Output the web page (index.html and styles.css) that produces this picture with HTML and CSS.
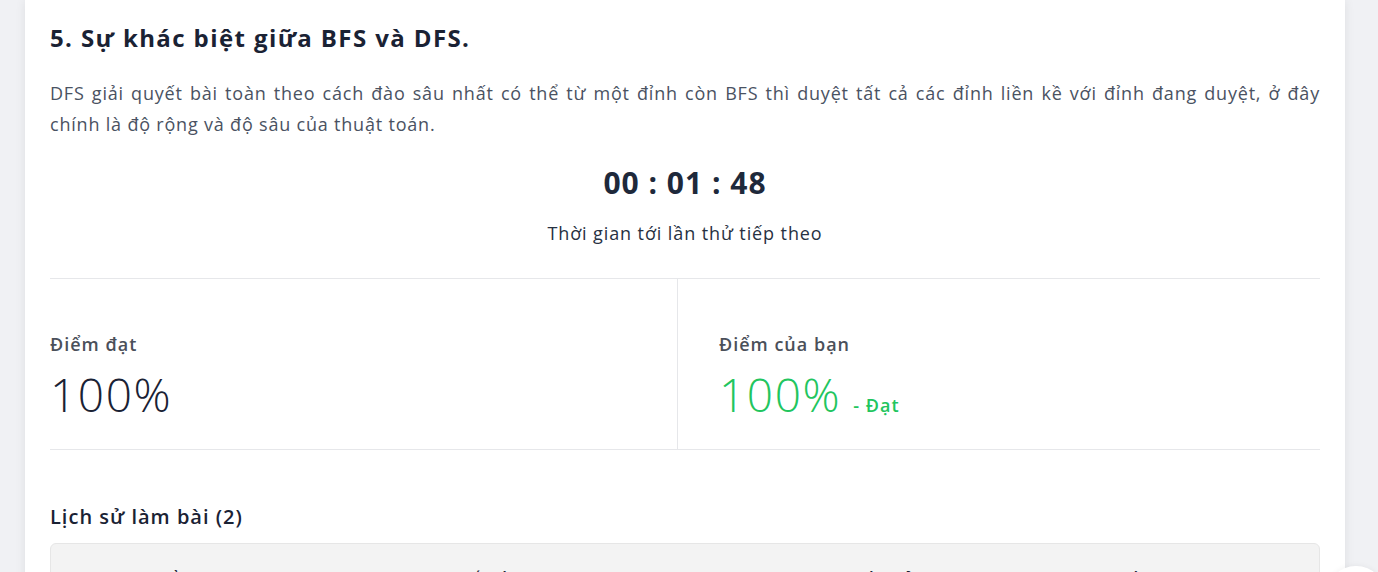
FILE: index.html
```html
<!DOCTYPE html>
<html lang="vi">
<head>
<meta charset="utf-8">
<title>Kết quả bài tập</title>
<link rel="stylesheet" href="styles.css">
</head>
<body>
<div class="page">
  <main class="card">
    <h2 class="title">5. Sự khác biệt giữa BFS và DFS.</h2>
    <p class="desc">DFS giải quyết bài toàn theo cách đào sâu nhất có thể từ một đỉnh còn BFS thì duyệt tất cả các đỉnh liền kề với đỉnh đang duyệt, ở đây chính là độ rộng và độ sâu của thuật toán.</p>
    <div class="timer">00 : 01 : 48</div>
    <div class="timer-caption">Thời gian tới lần thử tiếp theo</div>
    <div class="stats">
      <div class="stat stat-left">
        <div class="stat-label">Điểm đạt</div>
        <div class="stat-value">100%</div>
      </div>
      <div class="stat stat-right">
        <div class="stat-label">Điểm của bạn</div>
        <div class="stat-value pass">100%<span class="stat-note">- Đạt</span></div>
      </div>
    </div>
    <h3 class="history-title">Lịch sử làm bài (2)</h3>
    <div class="history">
      <div class="history-head">
        <span class="col c1">Điểm</span>
        <span class="col c2">Thời gian bắt đầu</span>
        <span class="col c3">Thời gian nộp bài</span>
        <span class="col c4">Kết quả</span>
        <span class="col c5">Chi tiết</span>
      </div>
    </div>
  </main>
</div>
<div class="fab"></div>
</body>
</html>
```
FILE: styles.css
```css
html, body {
  margin: 0;
  padding: 0;
}
body {
  background: #f0f1f4;
  font-family: "Open Sans", "Noto Sans", sans-serif;
  color: #1e293b;
  overflow: hidden;
  height: 572px;
}
.page {
  padding-left: 25px;
  width: 1320px;
}
.card {
  background: #fff;
  box-shadow: 0 0 10px rgba(0, 0, 0, 0.08);
  padding: 0 25px;
  height: 700px;
  box-sizing: border-box;
}
.title {
  margin: 0;
  padding-top: 22px;
  font-size: 24px;
  line-height: 32px;
  font-weight: 700;
  letter-spacing: 1.4px;
  color: #1a2234;
}
.desc {
  margin: 24px 0 0;
  font-size: 18px;
  line-height: 31px;
  letter-spacing: 0.8px;
  color: #4a5262;
  text-align: justify;
}
.timer {
  margin-top: 23px;
  text-align: center;
  font-size: 30px;
  line-height: 40px;
  font-weight: 700;
  letter-spacing: 1px;
  color: #1e293b;
}
.timer-caption {
  margin-top: 16px;
  text-align: center;
  font-size: 18px;
  line-height: 28px;
  letter-spacing: 0.9px;
  color: #273142;
}
.stats {
  margin-top: 31px;
  display: flex;
  border-top: 1px solid #e6e7ea;
  border-bottom: 1px solid #e6e7ea;
}
.stat {
  padding: 52px 0 27px;
}
.stat-left {
  width: 627px;
  border-right: 1px solid #e6e7ea;
}
.stat-right {
  padding-left: 41px;
}
.stat-label {
  font-size: 18px;
  line-height: 26px;
  font-weight: 600;
  letter-spacing: 1px;
  color: #4b505a;
}
.stat-value {
  margin-top: 9px;
  font-size: 46px;
  line-height: 56px;
  font-weight: 300;
  letter-spacing: 1.6px;
  color: #1a2234;
}
.stat-value.pass {
  color: #22c55e;
}
.stat-note {
  margin-left: 12px;
  font-size: 18px;
  line-height: 1;
  font-weight: 600;
  letter-spacing: 1px;
}
.history-title {
  margin: 53px 0 0;
  font-size: 20px;
  line-height: 28px;
  font-weight: 600;
  letter-spacing: 1px;
  color: #1a2234;
}
.history {
  margin-top: 12px;
  background: #f3f3f3;
  border: 1px solid #e6e6e6;
  border-radius: 6px;
  height: 120px;
}
.history-head {
  display: flex;
  padding: 22px 0 0 100px;
  font-size: 16px;
  line-height: 24px;
  font-weight: 700;
  color: #1a2234;
}
.col {
  flex: 1;
}
.fab {
  position: fixed;
  left: 1326px;
  top: 566px;
  width: 60px;
  height: 60px;
  border-radius: 50%;
  background: #fff;
  box-shadow: 0 0 6px rgba(0, 0, 0, 0.06);
}
```
